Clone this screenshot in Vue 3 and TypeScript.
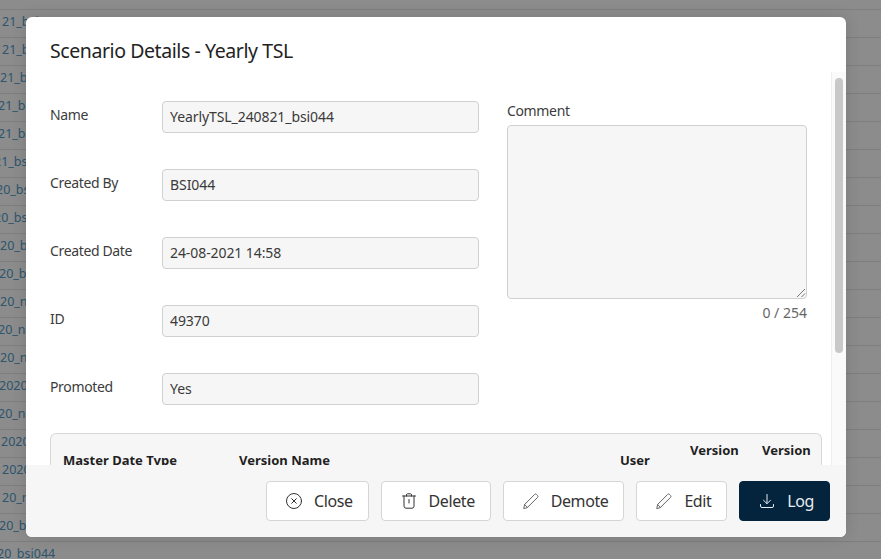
<script setup lang="ts">
const bgRows: { text: string; offset: number }[] = [
  { text: '', offset: 0 },
  { text: '21_bsi044', offset: 2 },
  { text: '21_bsi044', offset: 2 },
  { text: '21_bsi044', offset: 0 },
  { text: '21_bsi044', offset: -2 },
  { text: '21_bsi044', offset: -2 },
  { text: '21_bsi044', offset: -6 },
  { text: '20_bsi044', offset: -4 },
  { text: '20_bsi044', offset: -6 },
  { text: '20_bsi044', offset: 0 },
  { text: '20_bsi044', offset: -1 },
  { text: '20_nad044', offset: 0 },
  { text: '20_nad044', offset: -2 },
  { text: '20_nad044', offset: 0 },
  { text: '2020_nad044', offset: -1 },
  { text: '20_nad044', offset: -2 },
  { text: '2020_nad044', offset: 1 },
  { text: '2020_nad044', offset: 2 },
  { text: '20_nad044', offset: 2 },
  { text: '20_bsi044', offset: -1 },
  { text: '20_bsi044', offset: -3 },
]
const fields = [
  { label: 'Name', value: 'YearlyTSL_240821_bsi044' },
  { label: 'Created By', value: 'BSI044' },
  { label: 'Created Date', value: '24-08-2021 14:58' },
  { label: 'ID', value: '49370' },
  { label: 'Promoted', value: 'Yes' },
]
</script>

<template>
  <div class="page">
    <div class="bg">
      <div v-for="(r, i) in bgRows" :key="i" class="bg-row">
        <span class="bg-text" :style="{ marginLeft: r.offset + 'px' }">{{ r.text }}</span>
      </div>
    </div>
    <div class="overlay"></div>
    <div class="modal">
      <h2 class="title">Scenario Details - Yearly TSL</h2>
      <div class="body">
        <div class="scroll">
          <div class="form">
            <div class="left">
              <div v-for="f in fields" :key="f.label" class="field">
                <span class="label">{{ f.label }}</span>
                <div class="input">{{ f.value }}</div>
              </div>
            </div>
            <div class="right">
              <span class="label comment-label">Comment</span>
              <div class="textarea">
                <svg class="grip" width="10" height="10" viewBox="0 0 10 10">
                  <path d="M1 9 L9 1 M5.500 9 L9 5.500" stroke="#777" stroke-width="1" fill="none" />
                </svg>
              </div>
              <div class="counter">0 / 254</div>
            </div>
          </div>
          <div class="table">
            <div class="th th-master">Master Date Type</div>
            <div class="th th-name">Version Name</div>
            <div class="th th-user">User</div>
            <div class="th th-ver">Version</div>
            <div class="th th-ver">Version</div>
          </div>
        </div>
        <div class="scrollbar"><div class="thumb"></div></div>
      </div>
      <div class="footer">
        <button class="btn">
          <svg class="ico" viewBox="0 0 16 16"><circle cx="8" cy="8" r="7.500" /><path d="M5.700 5.700l4.600 4.600M10.300 5.700l-4.600 4.600" /></svg>
          <span>Close</span>
        </button>
        <button class="btn">
          <svg class="ico" viewBox="0 0 16 16"><path d="M1.500 3h13M5.500 3V1.800a1 1 0 0 1 1-1h3a1 1 0 0 1 1 1V3M3 3v10.200a2 2 0 0 0 2 2h6a2 2 0 0 0 2-2V3M8 6.500v3.500" /></svg>
          <span>Delete</span>
        </button>
        <button class="btn">
          <svg class="ico pen" viewBox="0 0 16 16"><path d="M.8 15.200l.8-3.700L11.700 1.400a1.300 1.300 0 0 1 1.800 0l1.100 1.100a1.300 1.300 0 0 1 0 1.800L4.500 14.400zM1.600 11.500l2.900 2.900" /></svg>
          <span>Demote</span>
        </button>
        <button class="btn">
          <svg class="ico pen" viewBox="0 0 16 16"><path d="M.8 15.200l.8-3.700L11.700 1.400a1.300 1.300 0 0 1 1.800 0l1.100 1.100a1.300 1.300 0 0 1 0 1.800L4.500 14.400zM1.600 11.500l2.900 2.900" /></svg>
          <span>Edit</span>
        </button>
        <button class="btn primary">
          <svg class="ico" viewBox="0 0 16 16"><path d="M8 1.500v9M4.500 7.200L8 10.700l3.500-3.500M1.500 11.500v1.500a1.500 1.500 0 0 0 1.500 1.500h10a1.500 1.500 0 0 0 1.500-1.500v-1.500" /></svg>
          <span>Log</span>
        </button>
      </div>
    </div>
  </div>
</template>

<style scoped>
.page {
  position: relative;
  width: 881px;
  height: 559px;
  overflow: hidden;
  background: #fff;
  font-family: "Noto Sans", "Open Sans", sans-serif;
  color: #2b2b2b;
}
.bg {
  margin-top: -18px;
}
.bg-row {
  height: 27px;
  border-bottom: 1px solid #e6e6e6;
  display: flex;
  align-items: center;
  overflow: hidden;
}
.bg-text {
  font-size: 12.5px;
  line-height: 24px;
  color: #529bc8;
  white-space: nowrap;
  flex: none;
  margin-bottom: 3px;
}
.overlay {
  position: absolute;
  inset: 0;
  background: rgba(0, 0, 0, 0.45);
}
.modal {
  position: absolute;
  left: 26px;
  top: 17px;
  width: 820px;
  height: 520px;
  background: #fff;
  border-radius: 6px;
  box-shadow: 0 0 16px rgba(0, 0, 0, 0.12);
  display: flex;
  flex-direction: column;
  overflow: hidden;
}
.title {
  margin: 0;
  padding: 20px 24px 0;
  height: 55px;
  box-sizing: border-box;
  font-size: 19.5px;
  letter-spacing: -0.42px;
  font-weight: 400;
  line-height: 27px;
  color: #222;
}
.body {
  flex: 1;
  min-height: 0;
  display: flex;
  overflow: hidden;
}
.scroll {
  flex: 1;
  min-width: 0;
  padding: 29px 0 0 24px;
}
.form {
  display: flex;
}
.left {
  width: 429px;
  flex: none;
  display: flex;
  flex-direction: column;
  gap: 36px;
}
.field {
  display: flex;
  align-items: flex-start;
}
.label {
  font-size: 14px;
  letter-spacing: -0.35px;
  line-height: 20px;
  color: #3c3c3c;
}
.field .label {
  width: 112px;
  flex: none;
  margin-top: 4px;
}
.input {
  width: 317px;
  height: 32px;
  box-sizing: border-box;
  border: 1px solid #d0d0d0;
  border-radius: 4px;
  background: #f6f6f6;
  font-size: 14px;
  letter-spacing: -0.08px;
  line-height: 30px;
  padding: 0 7px;
  color: #3a3a3a;
}
.right {
  margin-left: 28px;
  width: 300px;
}
.comment-label {
  display: block;
  margin-bottom: 4px;
}
.textarea {
  position: relative;
  width: 300px;
  height: 174px;
  box-sizing: border-box;
  border: 1px solid #d0d0d0;
  border-radius: 4px;
  background: #f6f6f6;
}
.grip {
  position: absolute;
  right: 0;
  bottom: 0;
}
.counter {
  text-align: right;
  font-size: 14px;
  line-height: 20px;
  margin-top: 4px;
  color: #666;
}
.table {
  margin-top: 28px;
  width: 772px;
  height: 80px;
  box-sizing: border-box;
  border: 1px solid #d8d8d8;
  border-bottom: none;
  border-radius: 6px 6px 0 0;
  background: #f6f6f6;
  display: flex;
  padding: 6px 0 0 12px;
  font-size: 13px;
  line-height: 20px;
  font-weight: 700;
  color: #1f1f1f;
  overflow: hidden;
}
.th {
  flex: none;
}
.th-master { width: 176px; margin-top: 10px; }
.th-name { width: 381px; margin-top: 10px; }
.th-user { width: 70px; margin-top: 10px; }
.th-ver { width: 72px; }
.th-ver:last-child { width: 48px; }
.scrollbar {
  width: 11px;
  flex: none;
  background: #fafafa;
  border-left: 1px solid #eee;
  padding: 6px 0 0 3px;
}
.thumb {
  width: 8px;
  height: 275px;
  border-radius: 4px;
  background: #c8c8c8;
}
.footer {
  position: absolute;
  left: 0;
  right: 0;
  bottom: 0;
  height: 72px;
  background: #f6f6f6;
  display: flex;
  justify-content: flex-end;
  align-items: flex-start;
  gap: 12px;
  padding: 16px 16px 0 0;
  box-sizing: border-box;
}
.btn {
  height: 40px;
  padding: 0 15px 0 19px;
  box-sizing: border-box;
  border: 1px solid #d5d5d5;
  border-radius: 4px;
  background: #fff;
  font-family: inherit;
  font-size: 16px;
  letter-spacing: -0.42px;
  color: #333;
  display: flex;
  align-items: center;
  gap: 12px;
}
.primary {
  background: #04233c;
  border-color: #04233c;
  color: #e6edf2;
}
.ico {
  width: 16px;
  height: 16px;
  fill: none;
  stroke: currentColor;
  stroke-width: 1;
  stroke-linecap: round;
  stroke-linejoin: round;
  overflow: visible;
}
.pen {
  stroke: #666;
}
</style>
